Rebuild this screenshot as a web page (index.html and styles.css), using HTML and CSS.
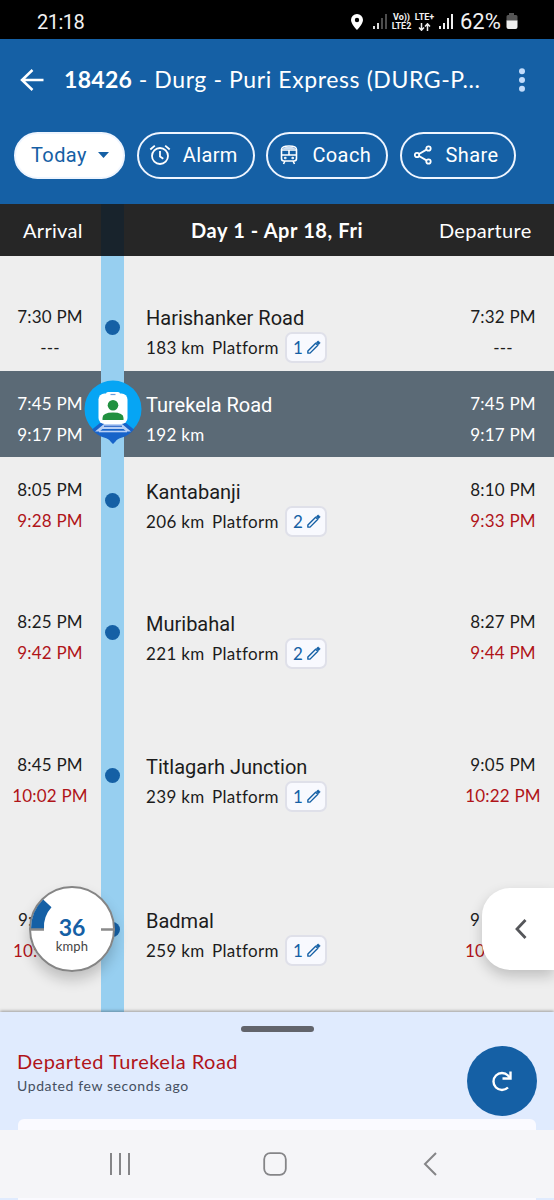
FILE: index.html
```
<!DOCTYPE html>
<html lang="en">

<head>
    <meta charset="UTF-8">
    <meta name="viewport" content="width=device-width, initial-scale=1.0">
    <title>18426 - Durg - Puri Express</title>
    <link rel="stylesheet" href="styles.css">
</head>

<body>
    <svg class="defs">
        <symbol id="pencil" viewBox="0 0 16 16">
            <path d="M2 14v-2.300L10.300 3.400l2.300 2.300L4.300 14z" fill="none" stroke="#1560a5" stroke-width="1.500" stroke-linejoin="round" />
            <path d="M11.200 2.500l1-1q.700-.600 1.400 0l.900.900q.600.700 0 1.400l-1 1z" fill="#1560a5" stroke="#1560a5" />
        </symbol>
    </svg>

    <div class="phone">
        <div class="status-bar">
            <span class="clock">21:18</span>
            <div class="status-icons">
                <svg class="pin" width="12" height="16" viewBox="0 0 12 16">
                    <path fill-rule="evenodd" d="M6 0a6 6 0 0 0-6 6c0 4 6 10 6 10s6-6 6-10a6 6 0 0 0-6-6zm0 3.800a2.200 2.200 0 1 1 0 4.400 2.200 2.200 0 0 1 0-4.400z" fill="#fff" />
                </svg>
                <svg class="signal-one" width="14" height="15" viewBox="0 0 14 15">
                    <path d="M1 12v3M5 9v6" stroke="#ddd" stroke-width="2" />
                    <path d="M9 4v11M13 0v15" stroke="#555" stroke-width="1.800" />
                </svg>
                <div class="net"><span>Vo))</span><span>LTE2</span></div>
                <div class="net net-plus">
                    <span>LTE+</span>
                    <svg width="13" height="8" viewBox="0 0 13 8">
                        <path d="M3.500 0v7M1 4.500l2.500 2.700L6 4.500M9.500 8V1M7 3.500L9.500.800 12 3.500" fill="none" stroke="#eee" stroke-width="1.500" />
                    </svg>
                </div>
                <svg class="signal-two" width="14" height="15" viewBox="0 0 14 15">
                    <path d="M1 12v3M5 9v6M9 4v11M13 0v15" stroke="#eee" stroke-width="2" />
                </svg>
                <span class="percent">62%</span>
                <svg class="battery" width="12" height="17" viewBox="0 0 12 17">
                    <path d="M3 0h5v2h2q1.500 0 1.500 1.500V8H.500V3.500Q.500 2 2 2h1z" fill="#555" />
                    <path d="M.500 7.500h11V14q0 2-2 2h-7q-2 0-2-2z" fill="#eee" />
                </svg>
            </div>
        </div>

        <div class="header">
            <div class="title-row">
                <svg class="back" width="24" height="24" viewBox="0 0 24 24">
                    <path d="M12.500 2L2 12l10.500 10M2 12h21.500" fill="none" stroke="#fff" stroke-width="2.500" />
                </svg>
                <h1 class="title"><b>18426</b> - Durg - Puri Express (DURG-P...</h1>
                <svg class="more" width="8" height="24" viewBox="0 0 8 24">
                    <g fill="#c3dcfb">
                        <circle cx="4" cy="3.200" r="3" />
                        <circle cx="4" cy="12" r="3" />
                        <circle cx="4" cy="20.800" r="3" />
                    </g>
                </svg>
            </div>
            <div class="pills">
                <button class="pill pill-today">Today
                    <svg width="11" height="6" viewBox="0 0 11 6"><path d="M0 0h11L5.500 6z" fill="#1560a5" /></svg>
                </button>
                <button class="pill pill-alarm">
                    <svg width="22" height="22" viewBox="0 0 22 22" fill="none" stroke="#fff" stroke-width="1.800">
                        <circle cx="11" cy="12" r="8" />
                        <path d="M11 7v5.500l3.300 2.300M1.300 5.500l4.500-3.900M20.700 5.500l-4.500-3.900" />
                    </svg>
                    Alarm
                </button>
                <button class="pill pill-coach">
                    <svg width="18" height="20" viewBox="0 0 18 20" fill="none" stroke="#fff" stroke-width="1.600">
                        <path d="M1.500 13.500V4.500Q1.500 1 9 1t7.500 3.500v9q0 2.500-2.500 2.500H4q-2.500 0-2.500-2.500zM1.500 5h15M1.500 10h15M9 5v5M5 16l-1.500 3M13 16l1.500 3" />
                        <path d="M2.500 4Q4 1.500 9 1.500T15.500 4z" fill="#cfe0f3" stroke="none" />
                        <circle cx="5.300" cy="13" r=".5" />
                        <circle cx="12.700" cy="13" r=".5" />
                    </svg>
                    Coach
                </button>
                <button class="pill pill-share">
                    <svg width="18" height="20" viewBox="0 0 18 20" fill="none" stroke="#fff" stroke-width="1.800">
                        <circle cx="3" cy="10" r="2.200" />
                        <circle cx="14.500" cy="3.500" r="2.200" />
                        <circle cx="14.500" cy="16.500" r="2.200" />
                        <path d="M5 9l7.500-4.400M5 11l7.500 4.400" />
                    </svg>
                    Share
                </button>
            </div>
        </div>

        <div class="table-head">
            <span>Arrival</span>
            <span class="head-track"></span>
            <b>Day 1 - Apr 18, Fri</b>
            <span class="head-departure">Departure</span>
        </div>

        <div class="stations">
            <div class="row row-first">
                <div class="times"><span>7:30 PM</span><span>---</span></div>
                <div class="track"><i class="dot"></i></div>
                <div class="info">
                    <div class="name">Harishanker Road</div>
                    <div class="meta"><span class="km">183 km</span><span class="platform">Platform</span><span class="badge">1<svg><use href="#pencil" /></svg></span></div>
                </div>
                <div class="times"><span>7:32 PM</span><span>---</span></div>
            </div>

            <div class="row row-current">
                <div class="times"><span>7:45 PM</span><span>9:17 PM</span></div>
                <div class="track">
                    <svg class="train" width="58" height="66" viewBox="0 0 58 66">
                        <circle cx="29" cy="29" r="28.500" fill="#06a5f4" />
                        <path d="M16 43h26l8 6.500C46 54 42 56.500 38 57.500q-5 1.500-6.500 4L29 64l-2.500-2.500q-1.500-2.500-6.500-4C16 56.500 12 54 8 49.500z" fill="#1763c9" />
                        <path d="M20 44h18l9 7.500h-4.500l-3-2.500h-21l-3 2.500H11z" fill="#b9d0f5" />
                        <path d="M20 46.300h18" stroke="#3f75cf" stroke-width="1.400" />
                        <path d="M15 51.500h28" stroke="#b9d0f5" stroke-width="1.600" />
                        <rect x="22" y="12" width="14" height="5" rx="2" fill="#fff" />
                        <rect x="14.500" y="13.500" width="29" height="30.500" rx="6" fill="#fff" />
                        <path d="M26.500 14.500h5" stroke="#6a9cdd" stroke-width="1.200" />
                        <circle cx="29" cy="25.200" r="5.300" fill="#21903f" />
                        <path d="M18.500 40v-2q0-5.500 10.500-5.500T39.500 38v2z" fill="#21903f" />
                    </svg>
                </div>
                <div class="info">
                    <div class="name">Turekela Road</div>
                    <div class="meta"><span class="km">192 km</span></div>
                </div>
                <div class="times"><span>7:45 PM</span><span>9:17 PM</span></div>
            </div>

            <div class="row row-kantabanji">
                <div class="times"><span>8:05 PM</span><span class="late">9:28 PM</span></div>
                <div class="track"><i class="dot"></i></div>
                <div class="info">
                    <div class="name">Kantabanji</div>
                    <div class="meta"><span class="km">206 km</span><span class="platform">Platform</span><span class="badge">2<svg><use href="#pencil" /></svg></span></div>
                </div>
                <div class="times"><span>8:10 PM</span><span class="late">9:33 PM</span></div>
            </div>

            <div class="row row-muribahal">
                <div class="times"><span>8:25 PM</span><span class="late">9:42 PM</span></div>
                <div class="track"><i class="dot"></i></div>
                <div class="info">
                    <div class="name">Muribahal</div>
                    <div class="meta"><span class="km">221 km</span><span class="platform">Platform</span><span class="badge">2<svg><use href="#pencil" /></svg></span></div>
                </div>
                <div class="times"><span>8:27 PM</span><span class="late">9:44 PM</span></div>
            </div>

            <div class="row row-titlagarh">
                <div class="times"><span>8:45 PM</span><span class="late">10:02 PM</span></div>
                <div class="track"><i class="dot"></i></div>
                <div class="info">
                    <div class="name">Titlagarh Junction</div>
                    <div class="meta"><span class="km">239 km</span><span class="platform">Platform</span><span class="badge">1<svg><use href="#pencil" /></svg></span></div>
                </div>
                <div class="times"><span>9:05 PM</span><span class="late">10:22 PM</span></div>
            </div>

            <div class="row row-badmal">
                <div class="times"><span>9:</span><span class="late">10:</span></div>
                <div class="track"><i class="dot"></i></div>
                <div class="info">
                    <div class="name">Badmal</div>
                    <div class="meta"><span class="km">259 km</span><span class="platform">Platform</span><span class="badge">1<svg><use href="#pencil" /></svg></span></div>
                </div>
                <div class="times"><span>9</span><span class="late">10</span></div>
            </div>

            <div class="speed">
                <svg class="speed-dial" width="86" height="86" viewBox="0 0 86 86">
                    <circle cx="43" cy="43" r="42" fill="#fff" stroke="#858585" stroke-width="2" />
                    <path d="M2 43A41 41 0 0 1 14.200 13.500L22.500 21.300A29 29 0 0 0 15 43z" fill="#1560a5" />
                    <path d="M1 43.500h14M72 43.500h14" stroke="#8a8a8a" stroke-width="2.500" />
                </svg>
                <b>36</b>
                <span>kmph</span>
            </div>

            <div class="drawer">
                <svg width="12" height="20" viewBox="0 0 12 20">
                    <path d="M10.500 1L2 10l8.500 9" fill="none" stroke="#55565a" stroke-width="2.800" />
                </svg>
            </div>
        </div>

        <div class="sheet">
            <div class="handle"></div>
            <div class="sheet-body">
                <div>
                    <div class="departed">Departed Turekela Road</div>
                    <div class="updated">Updated few seconds ago</div>
                </div>
                <button class="refresh">
                    <svg width="22" height="22" viewBox="0 0 22 22" fill="none" stroke="#fff" stroke-width="2.400">
                        <path d="M17 17.500A8.500 8.500 0 1 1 17 5.500L19 8" />
                        <path d="M19.500 1.500v7h-8" />
                    </svg>
                </button>
            </div>
            <div class="card"></div>
        </div>

        <div class="nav-bar">
            <svg width="22" height="22" viewBox="0 0 22 22"><path d="M2 0v22M11 0v22M20 0v22" stroke="#858588" stroke-width="2" /></svg>
            <svg class="nav-home" width="24" height="24" viewBox="0 0 24 24"><rect x="1.200" y="1.200" width="21.600" height="21.600" rx="6" fill="none" stroke="#858588" stroke-width="1.800" /></svg>
            <svg class="nav-back" width="14" height="24" viewBox="0 0 14 24"><path d="M13 1L2 12l11 11" fill="none" stroke="#858588" stroke-width="2" /></svg>
        </div>
        <div class="under-nav"><div></div></div>
    </div>
</body>

</html>
```

FILE: styles.css
```
* {
    margin: 0;
    padding: 0;
    box-sizing: border-box;
}

body {
    font-family: Lato, 'Open Sans', sans-serif;
    background-color: #eee;
}

svg {
    display: block;
    flex: none;
}

.defs {
    position: absolute;
    width: 0;
    height: 0;
}

.phone {
    width: 554px;
    height: 1200px;
    display: flex;
    flex-direction: column;
    overflow: hidden;
}

/* Status bar */
.status-bar {
    height: 39px;
    padding: 4px 36px 0 37px;
    background-color: #000;
    color: #f2f2f2;
    display: flex;
    justify-content: space-between;
    align-items: center;
    font-family: Roboto, sans-serif;
}

.clock {
    font-size: 20px;
    letter-spacing: -0.5px;
}

.status-icons {
    display: flex;
    align-items: center;
}

.signal-one {
    margin-left: 10px;
}

.net {
    width: 21px;
    margin-left: 4px;
    display: flex;
    flex-direction: column;
    align-items: center;
    font-size: 9px;
    font-weight: 700;
    line-height: 9px;
}

.net-plus {
    margin-left: 2px;
}

.net-plus svg {
    margin-top: 1px;
}

.signal-two {
    margin-left: 4px;
}

.percent {
    width: 44px;
    margin: 0 2px 0 7px;
    font-size: 22px;
}

/* Header */
.header {
    height: 165px;
    background-color: #1560a5;
    color: #fff;
}

.title-row {
    height: 81px;
    padding: 0 28px 0 20px;
    display: flex;
    align-items: center;
}

.title {
    flex: 1;
    margin: -2px 0 0 20px;
    font-size: 23px;
    font-weight: 400;
    letter-spacing: 0.6px;
    white-space: nowrap;
}

.title b {
    font-weight: 700;
    letter-spacing: 0.3px;
}

.pills {
    display: flex;
    gap: 11.700px;
    padding: 12px 14px 0;
}

.pill {
    height: 47px;
    border: 2px solid #eef5ff;
    border-radius: 24px;
    background-color: transparent;
    color: #fff;
    display: flex;
    align-items: center;
    font-family: Roboto, sans-serif;
    font-size: 20px;
    line-height: 24px;
    padding-bottom: 1px;
    letter-spacing: 0.4px;
}

.pill-today {
    width: 111px;
    padding-left: 15px;
    gap: 11px;
    background-color: #fff;
    color: #1560a5;
}

.pill-alarm {
    width: 118px;
    padding-left: 10px;
    gap: 12px;
}

.pill-coach {
    width: 121.500px;
    padding-left: 12px;
    gap: 14px;
}

.pill-share {
    width: 116.500px;
    padding-left: 12px;
    gap: 14px;
}

/* Table head */
.table-head {
    height: 52px;
    background-color: #262626;
    color: #fff;
    display: grid;
    grid-template-columns: 101px 23px 1fr 138px;
    align-items: center;
    font-size: 20px;
    letter-spacing: 0.3px;
}

.table-head span:first-child {
    padding-left: 23px;
}

.table-head b {
    padding-left: 67px;
    letter-spacing: 0.6px;
    white-space: nowrap;
}

.head-track {
    height: 52px;
    background-color: #18232c;
}

.head-departure {
    padding-left: 23px;
}

/* Stations */
.stations {
    position: relative;
    height: 756px;
    overflow: hidden;
}

.row {
    display: grid;
    grid-template-columns: 101px 23px 1fr 102px;
    color: #1c1c1c;
}

.row-first {
    height: 115px;
}

.row-first .times {
    padding-top: 45px;
}

.row-first .info {
    padding-top: 46px;
}

.row-first .track {
    padding-top: 64px;
}

.row-current {
    height: 86px;
    background-color: #5b6a76;
    color: #fff;
}

.row-kantabanji {
    height: 132px;
}

.row-muribahal {
    height: 143px;
}

.row-titlagarh {
    height: 154px;
}

.row-badmal {
    height: 126px;
}

.times {
    padding: 17px 1px 0 0;
    display: flex;
    flex-direction: column;
    align-items: center;
    font-size: 17px;
    line-height: 31px;
    letter-spacing: 0.2px;
}

.times:last-child {
    padding-right: 0;
}

/* Times of the last row run under the floating controls */
.row-badmal .times {
    align-items: flex-start;
    padding: 18px 0 0 18px;
}

.row-badmal .late {
    margin-left: -5px;
}

.late {
    color: #b01419;
}

.track {
    position: relative;
    padding-top: 36px;
    background-color: #97cff0;
}

.dot {
    display: block;
    width: 15px;
    height: 15px;
    margin: 0 auto;
    border-radius: 50%;
    background-color: #1560a5;
}

.train {
    position: absolute;
    left: -17.500px;
    top: 9px;
    z-index: 1;
}

.info {
    padding: 18px 0 0 22px;
}

.row-kantabanji .info,
.row-muribahal .info,
.row-titlagarh .info,
.row-badmal .info {
    padding-top: 19px;
}

.name {
    font-family: Roboto, sans-serif;
    font-size: 20px;
    line-height: 32px;
}

.meta {
    height: 27px;
    display: flex;
    align-items: center;
    font-size: 17px;
    letter-spacing: 0.35px;
}

.km {
    width: 66px;
}

.platform {
    width: 73px;
}

.badge {
    width: 42px;
    height: 31px;
    padding: 0 4px 0 6px;
    border: 2px solid #dfe0e9;
    border-radius: 7px;
    background-color: #f8f9fe;
    color: #1560a5;
    display: flex;
    justify-content: space-between;
    align-items: center;
}

.badge svg {
    width: 15px;
    height: 15px;
}

/* Speed and drawer float over the list */
.speed {
    position: absolute;
    left: 29px;
    top: 630px;
    z-index: 2;
    width: 86px;
    height: 86px;
    border-radius: 50%;
    box-shadow: 0 8px 14px rgba(0, 0, 0, 0.2);
    padding-top: 29px;
    text-align: center;
}

.speed-dial {
    position: absolute;
    left: 0;
    top: 0;
}

.speed b,
.speed span {
    position: relative;
    display: block;
}

.speed b {
    color: #1560a5;
    font-size: 23px;
    line-height: 24px;
}

.speed span {
    color: #444;
    font-size: 13px;
    line-height: 14px;
    letter-spacing: 0.2px;
}

.drawer {
    position: absolute;
    right: 0;
    top: 632px;
    z-index: 2;
    width: 72px;
    height: 82px;
    padding-left: 33px;
    border-radius: 28px 0 0 28px;
    background-color: #fff;
    box-shadow: 0 6px 14px rgba(0, 0, 0, 0.2);
    display: flex;
    align-items: center;
}

/* Bottom sheet */
.sheet {
    position: relative;
    z-index: 3;
    height: 118px;
    background-color: #e0ebfe;
    box-shadow: 0 -1px 3px rgba(0, 0, 0, 0.35);
    display: flex;
    flex-direction: column;
}

.handle {
    width: 73px;
    height: 6px;
    margin: 14px auto 0;
    border-radius: 3px;
    background-color: #62646b;
}

.sheet-body {
    height: 87px;
    padding: 14px 17px 0;
    display: flex;
    justify-content: space-between;
}

.departed {
    margin-top: 2px;
    color: #b01419;
    font-size: 20px;
    line-height: 26px;
    letter-spacing: 0.5px;
}

.updated {
    color: #454f60;
    font-size: 14px;
    line-height: 24px;
    letter-spacing: 0.6px;
}

.refresh {
    width: 70px;
    height: 70px;
    border: none;
    border-radius: 50%;
    background-color: #1560a5;
    display: flex;
    justify-content: center;
    align-items: center;
}

.card {
    height: 11px;
    margin: 0 18px;
    border-radius: 6px 6px 0 0;
    background-color: #fafaff;
}

/* Navigation bar */
.nav-bar {
    position: relative;
    z-index: 3;
    height: 68px;
    padding-left: 109px;
    background-color: #f5f5f8;
    display: flex;
    align-items: center;
}

.nav-home {
    margin-left: 132px;
}

.nav-back {
    margin-left: 136px;
}

.under-nav {
    height: 2px;
    padding: 0 18px;
    background-color: #e0ebfe;
}

.under-nav div {
    height: 2px;
    background-color: #fafaff;
}
```
